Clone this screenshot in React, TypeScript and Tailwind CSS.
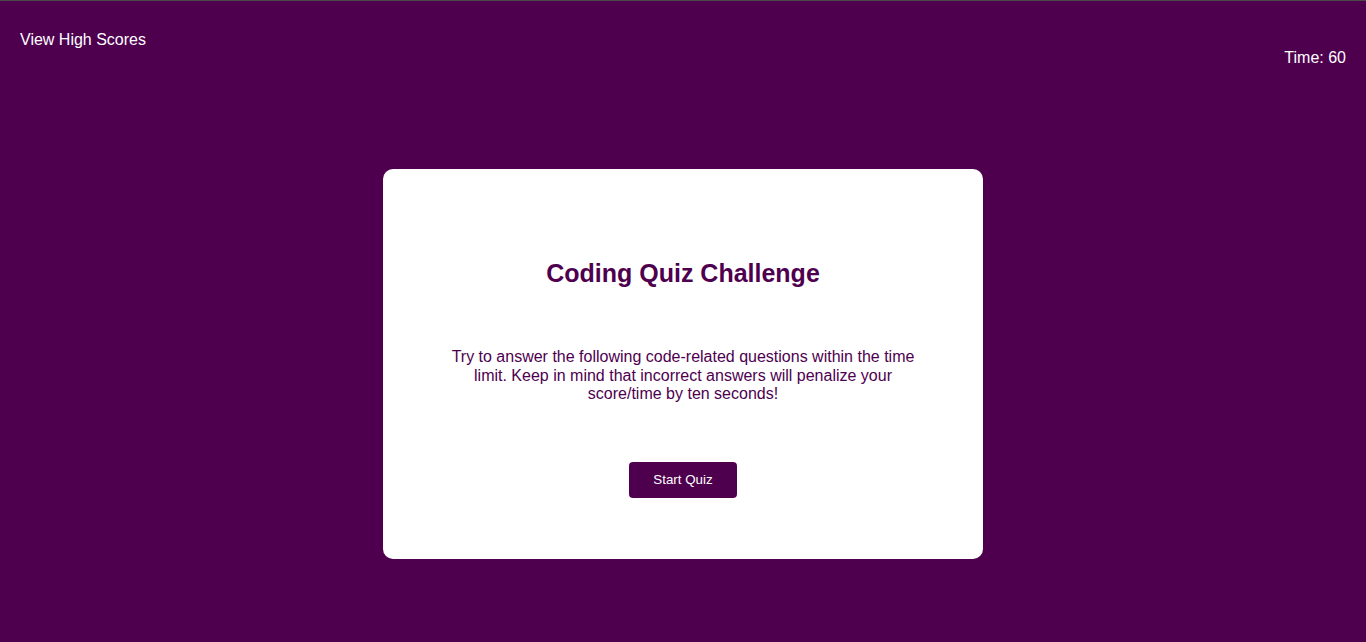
export default function App() {
  return (
    <div className="min-h-screen w-full bg-[#4e004f] border-t border-[#4a4a4a] font-['Liberation_Sans',Arial,sans-serif] text-white">
      <header className="flex justify-between items-start px-5">
        <a href="#" className="mt-[30px] text-base leading-[18px]">View High Scores</a>
        <div className="mt-[48px] text-base leading-[18px]">Time: 60</div>
      </header>

      <main className="flex justify-center mt-[102px]">
        <section className="w-[600px] h-[390px] bg-white rounded-[10px] flex flex-col items-center text-[#4e004f]">
          <h1 className="mt-[90px] text-[25px] font-bold leading-[29px]">Coding Quiz Challenge</h1>
          <p className="mt-[60px] w-[480px] text-center text-base leading-[18.5px]">
            Try to answer the following code-related questions within the time limit. Keep in mind that incorrect answers will penalize your score/time by ten seconds!
          </p>
          <button className="mt-[58px] w-[108px] h-9 rounded bg-[#4e004f] text-white text-[13.33px]">
            Start Quiz
          </button>
        </section>
      </main>
    </div>
  );
}
